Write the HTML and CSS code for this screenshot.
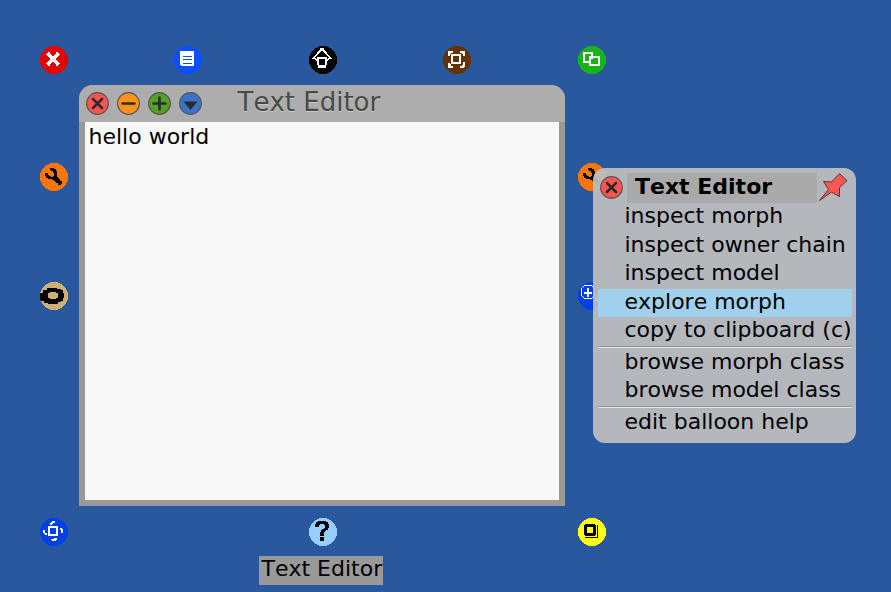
FILE: index.html
```
<!DOCTYPE html>
<html lang="en">
<head>
<meta charset="utf-8">
<title>Text Editor</title>
<link rel="stylesheet" href="styles.css">
</head>
<body>
<main class="desktop">
  <section class="window">
    <header class="titlebar">
      <svg class="control" viewBox="0 0 23 23"><circle cx="11.5" cy="11.5" r="10.9" fill="#ff5353"/><path d="M7 7l9 9M16 7l-9 9" stroke-width="2.6"/></svg>
      <svg class="control" viewBox="0 0 23 23"><circle cx="11.5" cy="11.5" r="10.9" fill="#ff9218"/><path d="M5.5 11.5h12" stroke-width="2.4"/></svg>
      <svg class="control" viewBox="0 0 23 23"><circle cx="11.5" cy="11.5" r="10.9" fill="#55a026"/><path d="M5.5 11.5h12M11.5 5.500v12" stroke-width="2.6"/></svg>
      <svg class="control" viewBox="0 0 23 23"><circle cx="11.5" cy="11.5" r="10.9" fill="#3973cd"/><path d="M4.500 9.500h14l-7 8.500z" class="solid"/></svg>
      <h1 class="title">Text Editor</h1>
    </header>
    <div class="editor">hello world</div>
  </section>

  <svg class="halo dismiss" viewBox="0 0 28 28"><circle cx="14" cy="14" r="14" fill="#e60000"/><path d="M8 8l10 10M18 8l-10 10" stroke="#fff" stroke-width="4"/><path d="M6 8h1V7h1V6h2v3H6zM16 6h2v1h1v1h1v1h-4zM6 17h4v3H8v-1H7v-1H6zM16 17h4v1h-1v1h-1v1h-2z" fill="#fff"/></svg>
  <svg class="halo menu-handle" viewBox="0 0 28 28"><circle cx="14" cy="14" r="14" fill="#0b50ff"/><path d="M6 5h14v15H7v-1H6z" fill="#fff"/><path d="M9 10h9v1H9zM9 13h9v1H9zM9 17h9v1H9z" fill="#0b50ff"/></svg>
  <svg class="halo pick-up" viewBox="0 0 28 28"><circle cx="14" cy="14" r="14" fill="#000"/><path d="M12 4L4 12.500h2l2 2.500M14 4l8 8.500h-2l-2 2.500" fill="none" stroke="#fff" stroke-width="1.700"/><path d="M11 2h4v3h-4zM8 11h10v8h-1v3H9v-3H8z" fill="#fff"/><path d="M10 13h6v6h-6z"/></svg>
  <svg class="halo drag" viewBox="0 0 28 28"><circle cx="14" cy="14" r="14" fill="#663300"/><path d="M5 5h5v2H8v1H7v2H5zM17 5h5v5h-2V8h-1V7h-2zM5 17h2v1h1v2h2v2H5zM20 16h2v5h-1v1h-4v-2h2v-1h1zM8 8h10v10H8z" fill="#fff"/><path d="M10 10h6v6h-6z" fill="#663300"/></svg>
  <svg class="halo duplicate" viewBox="0 0 28 28"><circle cx="14" cy="14" r="14" fill="#19b219"/><path d="M5 6h10v4h7v10H11v-3H5z" fill="#fff"/><path d="M7 8h6v2h-2v5H7zM13 12h7v6h-7z" fill="#19b219"/><path d="M11 12h4v3h-4z" fill="#fff"/><path d="M13 13h2v2h-2z" fill="#19b219"/></svg>
  <svg class="halo wrench" viewBox="0 0 28 28"><use href="#wrench"/></svg>
  <svg class="halo wrench-right" viewBox="0 0 28 28"><g id="wrench"><circle cx="14" cy="14" r="14" fill="#ff7500"/><path d="M10 5h4v1h2v2h1v6h1v1h1v1h1v2h2v3h-1v1h-3v-2h-2v-1h-1v-1h-1v-1h-2v-1H8v-1H6v-2H5v-3h3v2h1v1h2v1h2v-1h1v-3h-1V8h-2V7h-1z"/></g></svg>
  <svg class="halo collapse" viewBox="0 0 28 28"><circle cx="14" cy="14" r="14" fill="#ceb172"/><path fill-rule="evenodd" d="M7 6h10v1h4v1h2v3h1v5h-1v3h-2v1h-3v2H8v-1H4v-2H1v-1H0v-7h3V8h4zM10 10v1H8v5h2v1h6v-1h2v-5h-2v-1z"/></svg>
  <svg class="halo zoom-in" viewBox="0 0 28 28"><circle cx="14" cy="14" r="14" fill="#0040e6"/><path fill="#fff" d="M6 3h8v1H6zM5 4h1v1H5zM4 5h1v1H4zM3 6h1v8H3zM4 14h1v1H4zM5 15h1v1H5zM6 16h8v1H6zM14 15h1v1h-1zM15 14h2v1h-2zM16 6h1v8h-1zM14 4h2v1h-2zM15 5h1v1h-1zM6 10h8v2H6zM9 6h2v9H9zM17 15h2v2h1v2h-2v-2h-1z"/></svg>
  <svg class="halo rotate" viewBox="0 0 28 28"><circle cx="14" cy="14" r="14" fill="#0040e6"/><path d="M8 8h10v10H8zM12 3h3v2h-2v1h-1v1h-2V5h1V4h1zM20 10h2v1h1v4h-2v-3h-1zM3 12h2v3h2v2H5v-1H4v-1H3zM14 20h3v2h-1v1h-4v-1h-1v-1h3z" fill="#fff"/><path d="M10 10h6v6h-6z" fill="#0040e6"/></svg>
  <svg class="halo help" viewBox="0 0 28 28"><circle cx="14" cy="14" r="14" fill="#96cfff"/><path d="M9 3h8v1h2v2h1v4h-1v2h-2v1h-1v1h-1v4h-4v-4h1v-2h1v-1h2v-1h1V7h-1V6h-4v1H10v2H6V6h1V4h2zM11 19h4v4h-4z"/></svg>
  <svg class="halo resize" viewBox="0 0 28 28"><circle cx="14" cy="14" r="14" fill="#ffff14"/><path fill-rule="evenodd" d="M7 6h10v1h1v10h-1v1H7v-1H6V7h1zM9 9v6h6V9zM19 7h1v13H7v-1h12z"/></svg>

  <div class="name-tag">Text Editor</div>

  <nav class="menu">
    <div class="menu-head">
      <svg class="control" viewBox="0 0 23 23"><circle cx="11.5" cy="11.5" r="10.9" fill="#ff5353"/><path d="M7 7l9 9M16 7l-9 9" stroke-width="2.6"/></svg>
      <h2 class="menu-title">Text Editor</h2>
      <svg class="pin" viewBox="0 0 30 30"><path d="M1.500 27.500l9-11-5-8 8 .5 8-8.400 7.500 7-7.500 7v9l-8-4.500z" fill="#ff5656" stroke="#49383a" stroke-width="1"/></svg>
    </div>
    <div class="item">inspect morph</div>
    <div class="item">inspect owner chain</div>
    <div class="item">inspect model</div>
    <div class="item selected">explore morph</div>
    <div class="item">copy to clipboard (c)</div>
    <hr class="rule">
    <div class="item compact">browse morph class</div>
    <div class="item compact">browse model class</div>
    <hr class="rule">
    <div class="item">edit balloon help</div>
  </nav>
</main>
</body>
</html>
```
FILE: styles.css
```
* { box-sizing: border-box; }
body { margin: 0; }
.desktop {
  position: relative;
  width: 891px;
  height: 592px;
  overflow: hidden;
  background: #2a589f;
  color: #000;
  font: 22px/28px "DejaVu Sans", sans-serif;
  font-kerning: none;
  white-space: nowrap;
}
.window {
  position: absolute;
  left: 79px;
  top: 85px;
  width: 486px;
  height: 421px;
  display: flex;
  flex-direction: column;
  background: #999;
  border-radius: 14px 14px 0 0;
}
.titlebar {
  display: flex;
  align-items: center;
  gap: 8px;
  height: 37px;
  padding-left: 7px;
  background: #adadad;
  border-radius: 14px 14px 0 0;
}
.control { flex: none; width: 23px; height: 23px; }
.control circle { stroke: #555; stroke-width: 1.1; }
.control path { fill: none; stroke: #2b2b2b; stroke-linecap: round; }
.control .solid { fill: #2b2b2b; stroke: none; }
.title {
  margin: 0 0 4px 27.500px;
  font-size: 26px;
  font-weight: 400;
  line-height: 34px;
  color: #484a45;
  text-shadow: 0 1px 0 #cacaca;
}
.editor {
  flex: 1;
  margin: 0 6px 6px;
  padding: 1px 0 0 3.500px;
  background: #f8f8f8;
}
.halo { position: absolute; width: 28px; height: 28px; shape-rendering: crispEdges; }
.dismiss { left: 40px; top: 46px; }
.menu-handle { left: 174px; top: 46px; }
.pick-up { left: 309px; top: 46px; }
.drag { left: 443px; top: 46px; }
.duplicate { left: 578px; top: 46px; }
.wrench { left: 40px; top: 163px; }
.wrench-right { left: 578px; top: 163px; }
.collapse { left: 40px; top: 282px; }
.zoom-in { left: 578px; top: 282px; }
.rotate { left: 40px; top: 518px; }
.help { left: 309px; top: 518px; }
.resize { left: 578px; top: 518px; }
.name-tag {
  position: absolute;
  left: 259px;
  top: 556px;
  width: 124px;
  height: 29px;
  padding-left: 2.500px;
  line-height: 26px;
  background: #999;
}
.menu {
  position: absolute;
  left: 593px;
  top: 168px;
  width: 263px;
  height: 275px;
  padding: 5px 4px 0 5px;
  background: rgba(189, 189, 189, .94);
  border-radius: 12px;
}
.menu-head { display: flex; align-items: center; height: 30px; padding-left: 2px; }
.menu-head .control { margin-bottom: 2px; }
.menu-title {
  width: 190px;
  height: 30px;
  margin: 0 0 0 4px;
  padding-left: 8px;
  background: #aaa;
  font-size: 22px;
  line-height: 27px;
}
.pin { width: 30px; height: 30px; margin-left: 1px; }
.item { height: 28.5px; padding-left: 26.500px; line-height: 26px; }
.compact { height: 28px; }
.selected { background: #a1d0ed; }
.rule {
  height: 2px;
  margin: 0.5px 0 1px;
  border: 0;
  border-top: 1px solid #919191;
  background: #e4e4e4;
}
```
